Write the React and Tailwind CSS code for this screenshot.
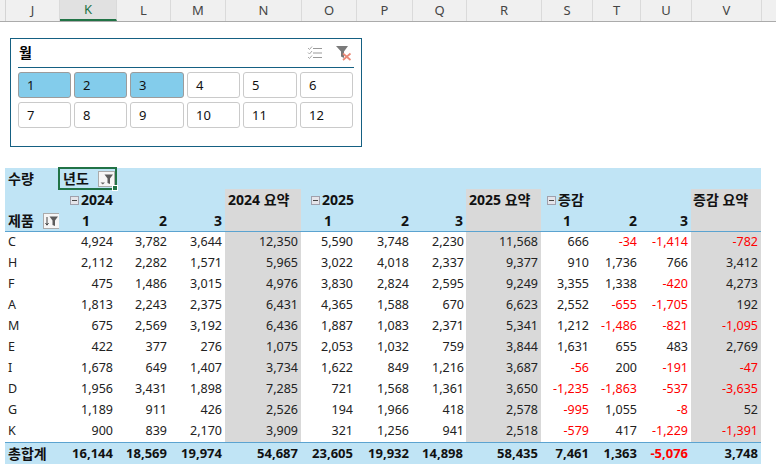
const COLS = ["J","K","L","M","N","O","P","Q","R","S","T","U","V"];
const GRID = "grid grid-cols-[54px_57px_54px_55px_76px_55px_56px_54px_75px_51px_48px_51px_70px]";
const ROWS = [
  ["C","4,924","3,782","3,644","12,350","5,590","3,748","2,230","11,568","666","-34","-1,414","-782"],
  ["H","2,112","2,282","1,571","5,965","3,022","4,018","2,337","9,377","910","1,736","766","3,412"],
  ["F","475","1,486","3,015","4,976","3,830","2,824","2,595","9,249","3,355","1,338","-420","4,273"],
  ["A","1,813","2,243","2,375","6,431","4,365","1,588","670","6,623","2,552","-655","-1,705","192"],
  ["M","675","2,569","3,192","6,436","1,887","1,083","2,371","5,341","1,212","-1,486","-821","-1,095"],
  ["E","422","377","276","1,075","2,053","1,032","759","3,844","1,631","655","483","2,769"],
  ["I","1,678","649","1,407","3,734","1,622","849","1,216","3,687","-56","200","-191","-47"],
  ["D","1,956","3,431","1,898","7,285","721","1,568","1,361","3,650","-1,235","-1,863","-537","-3,635"],
  ["G","1,189","911","426","2,526","194","1,966","418","2,578","-995","1,055","-8","52"],
  ["K","900","839","2,170","3,909","321","1,256","941","2,518","-579","417","-1,229","-1,391"],
];
const TOTAL = ["총합계","16,144","18,569","19,974","54,687","23,605","19,932","14,898","58,435","7,461","1,363","-5,076","3,748"];
const GREY = [4, 8, 12];

function FunnelGlyph({ sort }) {
  return (
    <svg width="15" height="14" viewBox="0 0 15 14">
      {sort ? (
        <path d="M3 3v8M1.5 9l1.5 2.2L4.5 9" stroke="#444" fill="none" strokeWidth="1" />
      ) : (
        <path d="M1.5 10.5h4.5l-2.2 2z" fill="#666" />
      )}
      <path d="M5.5 2.5h8.5L11 6.5V12l-2.5-1V6.5z" fill="#5c5c5c" />
    </svg>
  );
}

function FilterButton({ sort }) {
  return (
    <span className="flex h-[16px] w-[17px] items-center justify-center border border-[#ababab] bg-[#f6f6f6]">
      <FunnelGlyph sort={sort} />
    </span>
  );
}

function Minus() {
  return (
    <span className="mr-[2px] flex h-[9px] w-[9px] items-center justify-center border border-[#a0a0ac] bg-[#e4e4ea]">
      <span className="h-[1px] w-[5px] bg-[#444]" />
    </span>
  );
}

function Slicer() {
  const items = [1,2,3,4,5,6,7,8,9,10,11,12];
  return (
    <div className="ml-[10px] h-[109px] w-[352px] border border-[#156082] bg-white px-[7px]">
      <div className="flex h-[29px] items-center justify-between border-b border-[#156082] pr-[2px]">
        <span className="pl-[1px] text-[14px] font-bold text-black">월</span>
        <span className="flex items-center gap-[13px]">
          <svg width="16" height="14" viewBox="0 0 16 14" fill="none" stroke="#a8a8a8" strokeWidth="1">
            <path d="M6 2.5h9M6 7h9M6 11.5h9" stroke="#999" strokeWidth="1.2" />
            <path d="M1 2l1.5 1.5L5 .5M1 6.5L2.5 8 5 5M1 11l1.5 1.5L5 9.5" />
          </svg>
          <svg width="16" height="16" viewBox="0 0 16 16">
            <path d="M0 1h12L8 6.5V13L5 11.5V6.5z" fill="#7a7a7a" />
            <path d="M7 8.5l7.5 6.5M14.5 8.5L7 15" stroke="#ea8a78" strokeWidth="1.7" />
          </svg>
        </span>
      </div>
      <div className="mt-[4px] grid grid-cols-[53px_53px_54px_53px_54px_53px] gap-x-[3px] gap-y-[4px]">
        {items.map((n) => (
          <div
            key={n}
            className={
              "flex h-[26px] items-center rounded-[3px] border pl-[8px] text-[13px] text-[#111] " +
              (n <= 3 ? "border-[#9c9c9c] bg-[#83cceb]" : "border-[#cacaca] bg-white")
            }
          >
            {n}
          </div>
        ))}
      </div>
    </div>
  );
}

function PivotHeader() {
  const band = "bg-[#c0e4f5]";
  const grey = "bg-[#d9d9d9]";
  const cell = "flex h-[21px] items-center pt-[1px] text-[14px] font-bold";
  const num = (t, i) => (
    <div key={i} className={cell + " " + band + " justify-end pr-[3px]"}>{t}</div>
  );
  return (
    <div className="border-b border-[#5ba3d0]">
      <div className={GRID}>
        <div className={cell + " " + band + " pl-[3px]"}>수량</div>
        <div className={band}>
          <div className="relative -mx-[1px] -my-[1px] flex h-[23px] items-center justify-between border-2 border-[#217346] pl-[3px] pr-[0px] text-[14px] font-bold">
            <span>년도</span>
            <FilterButton />
            <span className="absolute -bottom-[3px] -right-[3px] h-[6px] w-[6px] border border-white bg-[#217346]" />
          </div>
        </div>
        <div className={"col-span-11 h-[21px] " + band} />
      </div>
      <div className={GRID}>
        <div className={cell + " " + band} />
        <div className={cell + " " + band + " col-span-3 pl-[11px]"}><Minus />2024</div>
        <div className={cell + " " + grey + " pl-[3px]"}>2024 요약</div>
        <div className={cell + " " + band + " col-span-3 pl-[10px]"}><Minus />2025</div>
        <div className={cell + " " + grey + " pl-[3px]"}>2025 요약</div>
        <div className={cell + " " + band + " col-span-3 pl-[6px]"}><Minus />증감</div>
        <div className={cell + " " + grey + " pl-[2px]"}>증감 요약</div>
      </div>
      <div className={GRID}>
        <div className={cell + " " + band + " justify-between pl-[3px] pr-[-1px]"}>
          제품
          <span className="mr-[-1px]"><FilterButton sort /></span>
        </div>
        <div className={cell + " " + band + " justify-end pr-[26px]"}>1</div>
        {num("2", 2)}{num("3", 3)}
        <div className={cell + " " + grey} />
        <div className={cell + " " + band + " justify-end pr-[24px]"}>1</div>
        {num("2", 6)}{num("3", 7)}
        <div className={cell + " " + grey} />
        <div className={cell + " " + band + " justify-end pr-[21px]"}>1</div>
        {num("2", 10)}{num("3", 11)}
        <div className={cell + " " + grey} />
      </div>
    </div>
  );
}

function DataRow({ row }) {
  return (
    <div className={GRID}>
      {row.map((t, i) => (
        <div
          key={i}
          className={
            "flex h-[21px] items-center " +
            (i === 0 ? "pl-[3px] " : i === 7 ? "justify-end pr-[2px] " : "justify-end pr-[3px] ") +
            (GREY.includes(i) ? "bg-[#d9d9d9] " : "") +
            (t.startsWith("-") ? "text-[#ff0000]" : "text-[#222]")
          }
        >
          {t}
        </div>
      ))}
    </div>
  );
}

export default function App() {
  return (
    <div className="h-[467px] w-[776px] overflow-hidden bg-white text-[12.5px] leading-none text-[#111] [font-family:'Noto_Sans','Noto_Sans_CJK_KR',sans-serif]">
      <div className="flex h-[22px] border-b border-[#ababab] bg-[#f0f0f0] pl-[5px]">
        <div className={GRID + " w-full border-l border-[#d4d4d4]"}>
          {COLS.map((c) => (
            <div
              key={c}
              className={
                "flex items-center justify-center border-r border-[#dadada] text-[13px] " +
                (c === "K" ? "border-b-2 border-b-[#217346] bg-[#e1e1e1] text-[#217346]" : "text-[#444]")
              }
            >
              {c}
            </div>
          ))}
        </div>
      </div>
      <div className="mt-[16px]"><Slicer /></div>
      <div className="ml-[5px] mt-[21px] w-[756px]">
        <PivotHeader />
        {ROWS.map((r) => <DataRow key={r[0]} row={r} />)}
        <div className={GRID + " border-t border-[#5ba3d0] bg-[#c0e4f5] text-[13px] font-bold"}>
          {TOTAL.map((t, i) => (
            <div
              key={i}
              className={
                "flex h-[21px] items-center " +
                (i === 0 ? "pl-[3px] text-[14px]" : "justify-end pr-[3px]") +
                (t.startsWith("-") ? " text-[#ff0000]" : "")
              }
            >
              {t}
            </div>
          ))}
        </div>
      </div>
    </div>
  );
}
